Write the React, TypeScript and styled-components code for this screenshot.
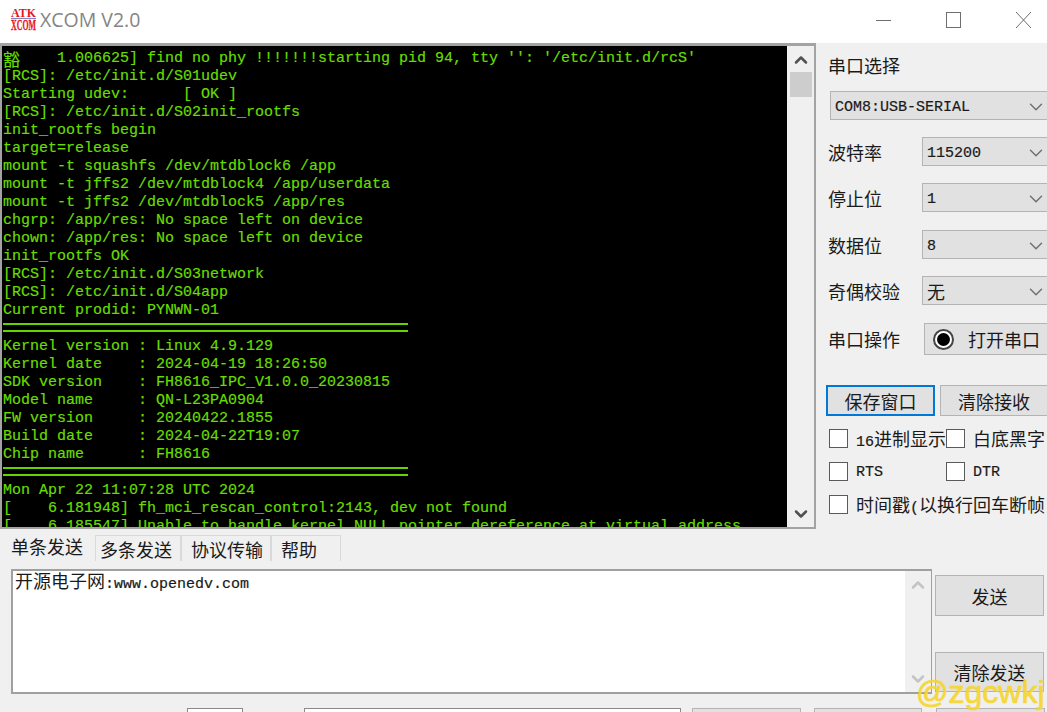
import React, { FC } from "react";
import styled, { createGlobalStyle } from "styled-components";
import { ChevronDown, ChevronUp } from "lucide-react";

const CJK = `"Noto Sans CJK SC", "Noto Sans", sans-serif`;
const MONO = `"Liberation Mono", "Noto Sans CJK SC", monospace`;

const GlobalStyle = createGlobalStyle`
  html, body {
    margin: 0;
    padding: 0;
    background: #f0f0f0;
    overflow: hidden;
  }
  * {
    box-sizing: border-box;
  }
`;

const Window = styled.div`
  position: relative;
  width: 1047px;
  height: 712px;
  overflow: hidden;
  display: flex;
  flex-direction: column;
  background: #f0f0f0;
  font-family: ${CJK};
  font-size: 18px;
  color: #1a1a1a;
`;

const TitleBar = styled.div`
  flex: none;
  height: 43px;
  background: #fff;
  display: flex;
  align-items: center;
  padding: 0 16px 0 11px;
`;

const Logo = styled.svg`
  flex: none;
  width: 25px;
  height: 23px;
  margin: -5px 4px 0 0;
  overflow: visible;
`;

const Title = styled.span`
  font-family: "Open Sans", "Noto Sans", sans-serif;
  font-size: 19.5px;
  color: #858585;
  margin-top: -5px;
`;

const WindowControls = styled.div`
  margin-left: auto;
  margin-top: -4px;
  display: flex;
  align-items: center;
  gap: 55px;
`;

const ControlIcon = styled.svg`
  flex: none;
  width: 15px;
  height: 16px;
  stroke: #6e6e6e;
  stroke-width: 1;
  fill: none;
`;

const Main = styled.div`
  flex: none;
  height: 486px;
  display: flex;
`;

const TerminalFrame = styled.div`
  flex: none;
  width: 816px;
  display: flex;
  border-top: 3px solid #a3a3a3;
  border-left: 2px solid #a3a3a3;
  border-right: 2px solid #a3a3a3;
  border-bottom: 2px solid #a3a3a3;
  background: #f0f0f0;
`;

const Terminal = styled.div`
  flex: none;
  width: 785px;
  background: #000;
  overflow: hidden;
  padding: 4px 0 0 1px;
  color: #68dc00;
  font-family: ${MONO};
  font-size: 15px;
  line-height: 18px;
  font-weight: 400;
  -webkit-text-stroke: 0.2px #68dc00;
`;

const Line = styled.div`
  white-space: pre;
  height: 18px;
`;

const WideGlyph = styled.span`
  display: inline-block;
  width: 18px;
  height: 18px;
  vertical-align: top;
  font-family: ${CJK};
  font-size: 17px;
  line-height: 17px;
`;

const Rule = styled.div`
  width: 405px;
  height: 18px;
  padding-bottom: 4px;
  display: flex;
  align-items: center;

  &::before {
    content: "";
    display: block;
    width: 100%;
    height: 5px;
    border-top: 2px solid #62d400;
    border-bottom: 2px solid #62d400;
  }
`;

const Scrollbar = styled.div<{ $width: number }>`
  flex: none;
  width: ${(p) => p.$width}px;
  display: flex;
  flex-direction: column;
  align-items: center;
  background: #f0f0f0;
`;

const ScrollThumb = styled.div`
  width: 22px;
  height: 25px;
  margin: 0 0 auto;
  background: #cdcdcd;
`;

const ScrollGap = styled.div`
  flex: 1;
`;

const Side = styled.div`
  flex: none;
  width: 231px;
  overflow: hidden;
  padding-left: 12px;
  display: flex;
  flex-direction: column;
`;

const SideTitle = styled.div`
  height: 48px;
  line-height: 44px;
  white-space: nowrap;
`;

const Field = styled.div<{ $gap: number; $height?: number }>`
  display: flex;
  align-items: center;
  width: 240px;
  height: ${(p) => p.$height ?? 29}px;
  margin-bottom: ${(p) => p.$gap}px;
  white-space: nowrap;
`;

const FieldLabel = styled.span`
  flex: none;
  width: 94px;
`;

const Select = styled.div<{ $inset?: number }>`
  flex: 1;
  height: 29px;
  margin-left: ${(p) => p.$inset ?? 0}px;
  display: flex;
  align-items: center;
  justify-content: space-between;
  padding: 4px 20px 0 4px;
  background: #e1e1e1;
  border: 1px solid #b4b4b4;
  font-family: ${MONO};
  font-size: 15px;
  -webkit-text-stroke: 0.2px #1a1a1a;

  svg {
    flex: none;
    margin-top: -2px;
    color: #707070;
    -webkit-text-stroke: 0;
  }
`;

const SelectCjk = styled.span`
  font-family: ${CJK};
  font-size: 18px;
  margin-top: -3px;
  -webkit-text-stroke: 0;
`;

const OpenButton = styled.div`
  flex: none;
  width: 130px;
  height: 32px;
  margin-left: 2px;
  display: flex;
  align-items: center;
  padding-left: 8px;
  gap: 14px;
  background: #e1e1e1;
  border: 1px solid #b4b4b4;
`;

const Radio = styled.span`
  flex: none;
  width: 21px;
  height: 21px;
  border-radius: 50%;
  border: 2px solid #444;
  background: #fff;
  display: flex;
  align-items: center;
  justify-content: center;

  &::after {
    content: "";
    width: 13px;
    height: 13px;
    border-radius: 50%;
    background: #000;
  }
`;

const ButtonRow = styled.div`
  display: flex;
  gap: 5px;
  margin: 30px 0 12px -2px;
  width: 240px;
`;

const Button = styled.div<{ $width: number; $height: number; $focused?: boolean }>`
  flex: none;
  width: ${(p) => p.$width}px;
  height: ${(p) => p.$height}px;
  display: flex;
  align-items: center;
  justify-content: center;
  white-space: nowrap;
  background: #e1e1e1;
  border: ${(p) => (p.$focused ? "2px solid #0078d7" : "1px solid #b4b4b4")};
`;

const CheckRow = styled.div<{ $gap: number }>`
  display: flex;
  align-items: center;
  height: 20px;
  margin: 0 0 ${(p) => p.$gap}px 1px;
  white-space: nowrap;
`;

const CheckItem = styled.label<{ $width?: number }>`
  display: flex;
  align-items: center;
  gap: 8px;
  flex: none;
  width: ${(p) => (p.$width ? `${p.$width}px` : "auto")};
`;

const CheckBox = styled.span`
  flex: none;
  width: 19px;
  height: 19px;
  background: #fff;
  border: 1px solid #5a5a5a;
`;

const Mono = styled.span`
  font-family: ${MONO};
  font-size: 15px;
  -webkit-text-stroke: 0.2px #1a1a1a;
`;

const MonoLabel = styled(Mono)`
  padding-top: 3px;
`;

const Tabs = styled.div`
  flex: none;
  height: 28px;
  margin-top: 4px;
  display: flex;
  align-items: flex-end;
`;

const Tab = styled.div<{ $width: number; $pad: number; $active?: boolean }>`
  flex: none;
  width: ${(p) => p.$width}px;
  height: ${(p) => (p.$active ? 28 : 26)}px;
  line-height: ${(p) => (p.$active ? 26 : 27)}px;
  padding-left: ${(p) => p.$pad}px;
  white-space: nowrap;
  background: #f0f0f0;
  border-right: ${(p) => (p.$active ? "0" : "1px solid #d9d9d9")};
  border-top: ${(p) => (p.$active ? "0" : "1px solid #d9d9d9")};
  border-left: ${(p) => (p.$active ? "0" : "1px solid #d9d9d9")};
`;

const SendPane = styled.div`
  flex: none;
  height: 146px;
  display: flex;
  padding: 8px 0 0 11px;
`;

const SendBox = styled.div`
  flex: none;
  width: 921px;
  height: 125px;
  display: flex;
  background: #fff;
  border: 2px solid #a0a0a0;
  border-right-width: 1px;
`;

const SendText = styled.div`
  flex: 1;
  padding-left: 2px;
  line-height: 19px;
  white-space: pre;
`;

const SendColumn = styled.div`
  flex: none;
  display: flex;
  flex-direction: column;
  gap: 36px;
  margin: 6px 0 0 3px;
`;

const BottomBar = styled.div`
  flex: none;
  display: flex;
  padding: 1px 0 0 187px;
`;

const BottomField = styled.div<{ $width: number; $gap: number }>`
  flex: none;
  width: ${(p) => p.$width}px;
  height: 30px;
  margin-right: ${(p) => p.$gap}px;
  background: #fff;
  border: 1px solid #8a8a8a;
`;

const BottomButton = styled.div<{ $width: number; $gap: number }>`
  flex: none;
  width: ${(p) => p.$width}px;
  height: 30px;
  margin-right: ${(p) => p.$gap}px;
  background: #e1e1e1;
  border: 1px solid #b4b4b4;
`;

const Watermark = styled.div`
  position: absolute;
  left: 916px;
  top: 674px;
  font-family: "Liberation Sans", sans-serif;
  font-size: 32px;
  line-height: 36px;
  color: #f6d52f;
  opacity: 0.92;
  white-space: nowrap;
  -webkit-text-stroke: 0.7px #f6d52f;
`;

const BOOT_TOP = [
  "[RCS]: /etc/init.d/S01udev",
  "Starting udev:      [ OK ]",
  "[RCS]: /etc/init.d/S02init_rootfs",
  "init_rootfs begin",
  "target=release",
  "mount -t squashfs /dev/mtdblock6 /app",
  "mount -t jffs2 /dev/mtdblock4 /app/userdata",
  "mount -t jffs2 /dev/mtdblock5 /app/res",
  "chgrp: /app/res: No space left on device",
  "chown: /app/res: No space left on device",
  "init_rootfs OK",
  "[RCS]: /etc/init.d/S03network",
  "[RCS]: /etc/init.d/S04app",
  "Current prodid: PYNWN-01",
];

const BOOT_INFO = [
  "Kernel version : Linux 4.9.129",
  "Kernel date    : 2024-04-19 18:26:50",
  "SDK version    : FH8616_IPC_V1.0.0_20230815",
  "Model name     : QN-L23PA0904",
  "FW version     : 20240422.1855",
  "Build date     : 2024-04-22T19:07",
  "Chip name      : FH8616",
];

const BOOT_END = [
  "Mon Apr 22 11:07:28 UTC 2024",
  "[    6.181948] fh_mci_rescan_control:2143, dev not found",
  "[    6.185547] Unable to handle kernel NULL pointer dereference at virtual address",
];

const FIELDS: { label: string; value: React.ReactNode; gap: number }[] = [
  { label: "波特率", value: "115200", gap: 17 },
  { label: "停止位", value: "1", gap: 18 },
  { label: "数据位", value: "8", gap: 17 },
  { label: "奇偶校验", value: <SelectCjk>无</SelectCjk>, gap: 18 },
];

const ScrollUp: FC<{ color: string }> = ({ color }) => (
  <ChevronUp size={20} strokeWidth={3} color={color} style={{ flex: "none", margin: "4px 0 2px" }} />
);

const ScrollDown: FC<{ color: string }> = ({ color }) => (
  <ChevronDown size={20} strokeWidth={3} color={color} style={{ flex: "none", marginBottom: 3 }} />
);

export default function App() {
  return (
    <Window>
      <GlobalStyle />
      <TitleBar>
        <Logo viewBox="0 0 25 23">
          <text x="0" y="9" textLength="25" lengthAdjust="spacingAndGlyphs" fontFamily="Liberation Serif" fontWeight="700" fontSize="12" fill="#e8141c">
            ATK
          </text>
          <rect x="0" y="10" width="25" height="1" fill="#7d86c8" />
          <text x="0" y="22" textLength="25" lengthAdjust="spacingAndGlyphs" fontFamily="Liberation Serif" fontWeight="700" fontSize="15" fill="#e8141c" stroke="#e8141c" strokeWidth="0.3">
            XCOM
          </text>
        </Logo>
        <Title>XCOM V2.0</Title>
        <WindowControls>
          <ControlIcon viewBox="0 0 15 16">
            <path d="M0 8.5h15" />
          </ControlIcon>
          <ControlIcon viewBox="0 0 15 16">
            <rect x="0.5" y="0.5" width="14" height="15" />
          </ControlIcon>
          <ControlIcon viewBox="0 0 15 16">
            <path d="M0 0l15 16M15 0L0 16" />
          </ControlIcon>
        </WindowControls>
      </TitleBar>
      <Main>
        <TerminalFrame>
          <Terminal>
            <Line>
              <WideGlyph>豁</WideGlyph>
              {"    1.006625] find no phy !!!!!!!starting pid 94, tty '': '/etc/init.d/rcS'"}
            </Line>
            {BOOT_TOP.map((l) => (
              <Line key={l}>{l}</Line>
            ))}
            <Rule />
            {BOOT_INFO.map((l) => (
              <Line key={l}>{l}</Line>
            ))}
            <Rule />
            {BOOT_END.map((l) => (
              <Line key={l}>{l}</Line>
            ))}
          </Terminal>
          <Scrollbar $width={27}>
            <ScrollUp color="#505050" />
            <ScrollThumb />
            <ScrollDown color="#505050" />
          </Scrollbar>
        </TerminalFrame>
        <Side>
          <SideTitle>串口选择</SideTitle>
          <Field $gap={17}>
            <Select $inset={2}>
              COM8:USB-SERIAL
              <ChevronDown size={22} strokeWidth={1.6} />
            </Select>
          </Field>
          {FIELDS.map((f) => (
            <Field key={f.label} $gap={f.gap}>
              <FieldLabel>{f.label}</FieldLabel>
              <Select>
                {f.value}
                <ChevronDown size={22} strokeWidth={1.6} />
              </Select>
            </Field>
          ))}
          <Field $gap={0} $height={32}>
            <FieldLabel>串口操作</FieldLabel>
            <OpenButton>
              <Radio />
              打开串口
            </OpenButton>
          </Field>
          <ButtonRow>
            <Button $width={109} $height={31} $focused>
              保存窗口
            </Button>
            <Button $width={108} $height={31}>
              清除接收
            </Button>
          </ButtonRow>
          <CheckRow $gap={13}>
            <CheckItem $width={117}>
              <CheckBox />
              <span>
                <Mono>16</Mono>进制显示
              </span>
            </CheckItem>
            <CheckItem>
              <CheckBox />
              白底黑字
            </CheckItem>
          </CheckRow>
          <CheckRow $gap={13}>
            <CheckItem $width={117}>
              <CheckBox />
              <MonoLabel>RTS</MonoLabel>
            </CheckItem>
            <CheckItem>
              <CheckBox />
              <MonoLabel>DTR</MonoLabel>
            </CheckItem>
          </CheckRow>
          <CheckRow $gap={0}>
            <CheckItem>
              <CheckBox />
              <span>
                时间戳<Mono>(</Mono>以换行回车断帧<Mono>)</Mono>
              </span>
            </CheckItem>
          </CheckRow>
        </Side>
      </Main>
      <Tabs>
        <Tab $width={95} $pad={11} $active>
          单条发送
        </Tab>
        <Tab $width={86} $pad={4}>
          多条发送
        </Tab>
        <Tab $width={90} $pad={9}>
          协议传输
        </Tab>
        <Tab $width={70} $pad={9}>
          帮助
        </Tab>
      </Tabs>
      <SendPane>
        <SendBox>
          <SendText>
            开源电子网<Mono>:www.openedv.com</Mono>
          </SendText>
          <Scrollbar $width={26}>
            <ScrollUp color="#c4c4c4" />
            <ScrollGap />
            <ScrollDown color="#c4c4c4" />
          </Scrollbar>
        </SendBox>
        <SendColumn>
          <Button $width={109} $height={41}>
            发送
          </Button>
          <Button $width={109} $height={40}>
            清除发送
          </Button>
        </SendColumn>
      </SendPane>
      <BottomBar>
        <BottomField $width={56} $gap={61} />
        <BottomField $width={377} $gap={11} />
        <BottomButton $width={109} $gap={13} />
        <BottomButton $width={108} $gap={14} />
        <BottomButton $width={109} $gap={0} />
      </BottomBar>
      <Watermark>@zgcwkj</Watermark>
    </Window>
  );
}
